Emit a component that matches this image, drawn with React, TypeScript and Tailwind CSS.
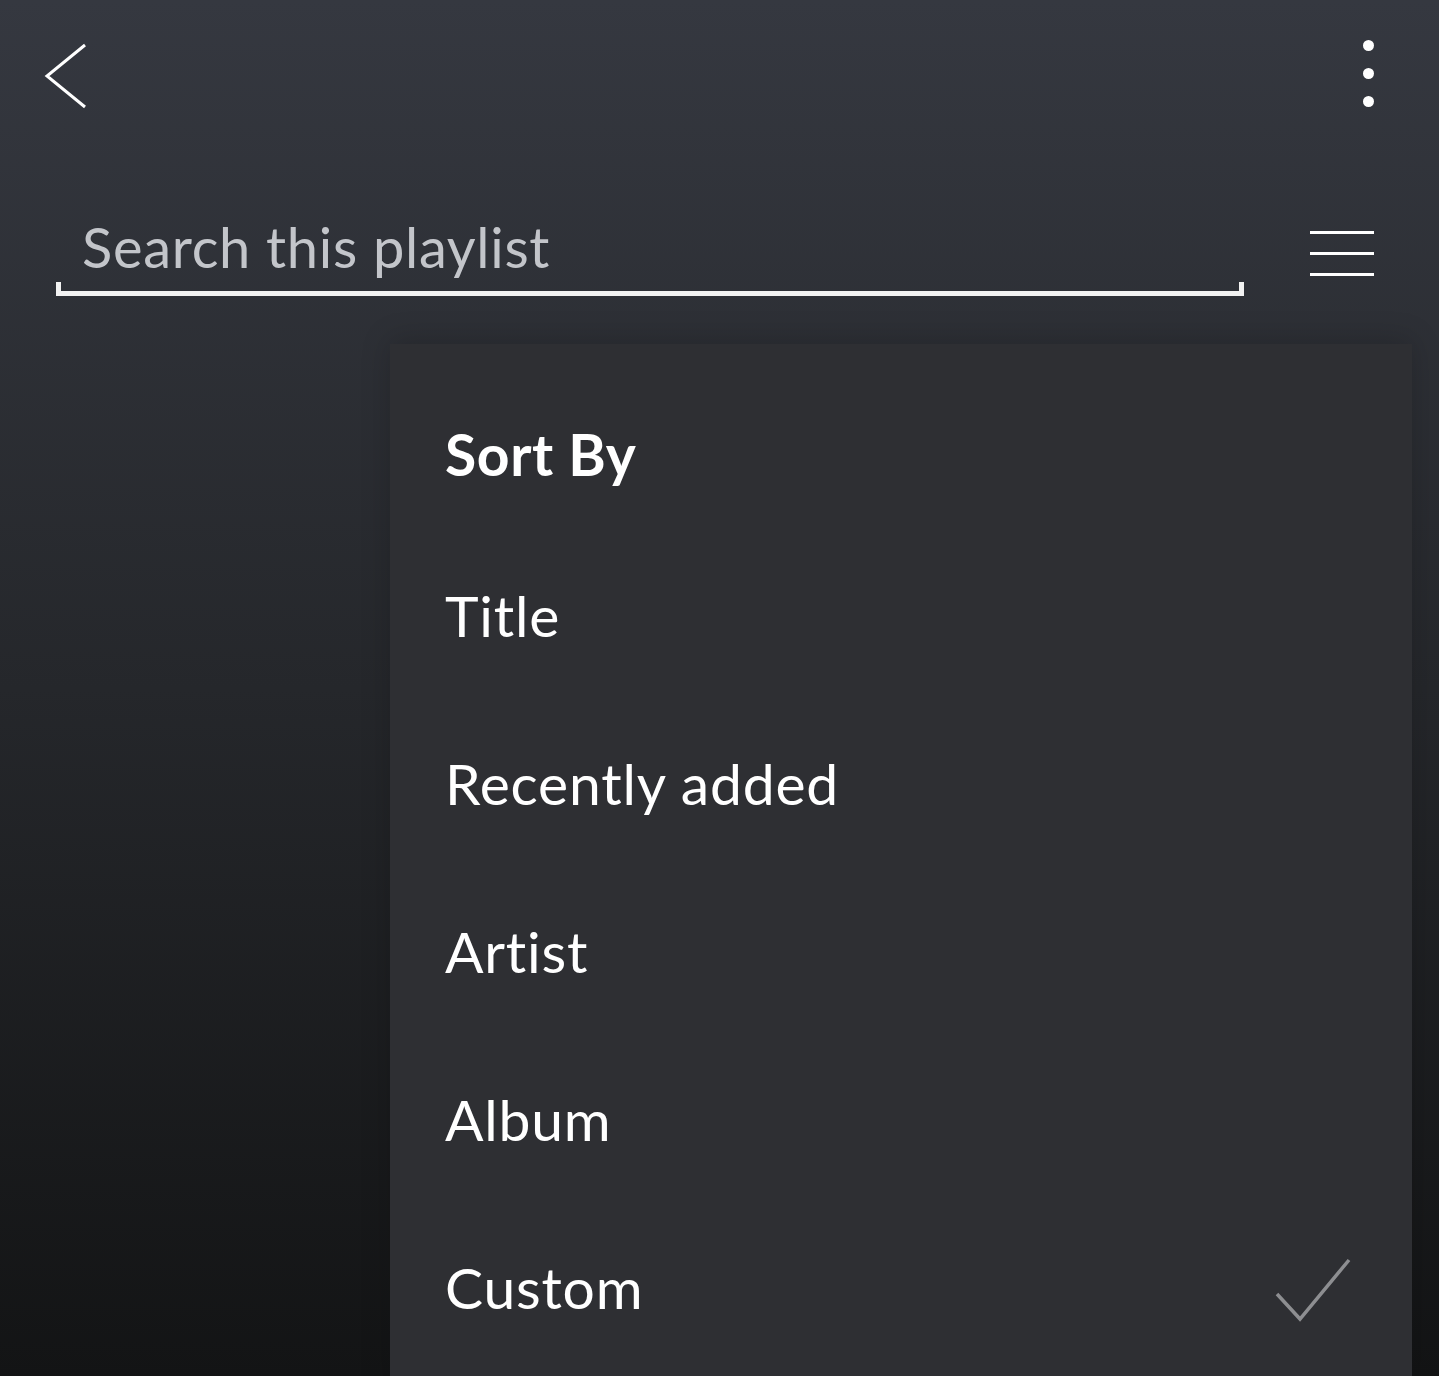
const options = ['Title', 'Recently added', 'Artist', 'Album', 'Custom'];

export default function App() {
  const selected = 'Custom';

  return (
    <div
      className="flex h-[1376px] w-full flex-col overflow-hidden bg-gradient-to-b from-[#353840] via-[#25272b] to-[#131415] font-['Lato',sans-serif] text-white"
    >
      {/* top bar */}
      <div className="flex h-[213px] shrink-0 items-start justify-between pl-[44px] pr-[65px] pt-[43px]">
        <button className="block">
          <svg width="44" height="66" viewBox="0 0 44 66" fill="none">
            <path d="M41 2 L3 33 L41 64" stroke="white" strokeWidth="3" />
          </svg>
        </button>
        <button className="-mt-[3px] flex flex-col gap-[17px]">
          <span className="h-[11px] w-[11px] rounded-full bg-white" />
          <span className="h-[11px] w-[11px] rounded-full bg-white" />
          <span className="h-[11px] w-[11px] rounded-full bg-white" />
        </button>
      </div>

      {/* search */}
      <div className="flex shrink-0 items-end pl-[56px] pr-[65px]">
        <div className="relative w-[1188px] border-b-[5px] border-[#f2f2f2] pb-[10px] pl-[26px]">
          <span className="absolute bottom-[-5px] left-0 h-[14px] w-[5px] bg-[#f2f2f2]" />
          <span className="absolute bottom-[-5px] right-0 h-[14px] w-[5px] bg-[#f2f2f2]" />
          <input
            placeholder="Search this playlist"
            className="w-full bg-transparent text-[56px] leading-[68px] tracking-[0.7px] text-white placeholder:text-[#c3c5ca] focus:outline-none"
          />
        </div>
        <div className="ml-auto mb-[20px] flex w-[64px] flex-col gap-[18px]">
          <span className="h-[3px] w-full bg-white" />
          <span className="h-[3px] w-full bg-white" />
          <span className="h-[3px] w-full bg-white" />
        </div>
      </div>

      {/* sort menu */}
      <div className="ml-[390px] mr-[27px] mt-[48px] flex-1 shrink-0 bg-[#2e2f33] pl-[55px] pr-[60px] pt-[53px] shadow-[0_-4px_28px_rgba(0,0,0,0.18)]">
        <div className="h-[161px] text-[57px] font-bold leading-[114px] tracking-[0.6px]">Sort By</div>
        {options.map((opt) => (
          <div key={opt} className="flex h-[168px] items-start justify-between">
            <span className="text-[57px] leading-[114px] tracking-[0.8px]">{opt}</span>
            {opt === selected && (
              <svg className="mt-[28px]" width="78" height="66" viewBox="0 0 78 66" fill="none">
                <path d="M3 36 L26 61 L75 2" stroke="#8d8e91" strokeWidth="3.5" />
              </svg>
            )}
          </div>
        ))}
      </div>
    </div>
  );
}
